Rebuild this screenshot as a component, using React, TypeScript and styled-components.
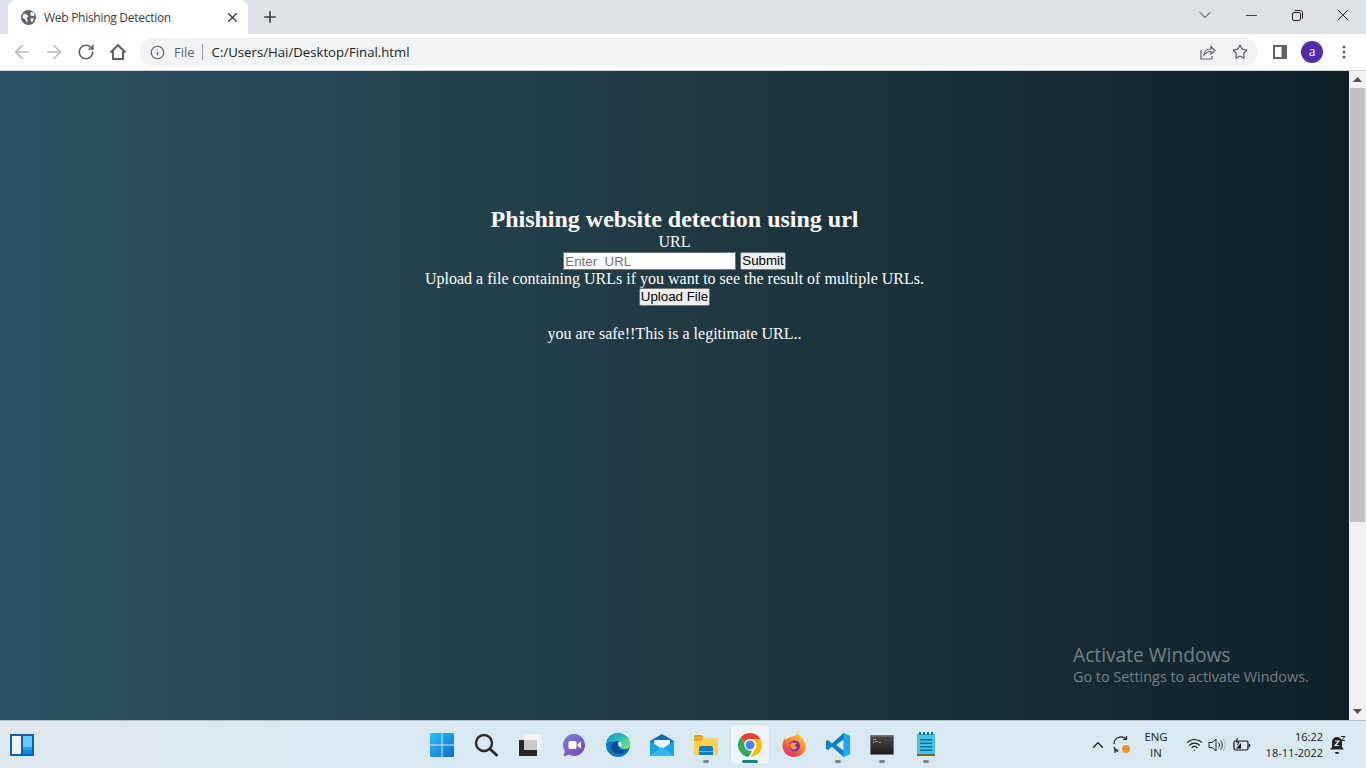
import React from "react"
import styled, { createGlobalStyle } from "styled-components"
import { ChevronDown, X, Plus, Minus, ArrowLeft, ArrowRight, RotateCw, Info, Star, ChevronUp, Wifi } from "lucide-react"

const GlobalStyle = createGlobalStyle`
  html, body { margin: 0; padding: 0; height: 100%; overflow: hidden; }
  #root { height: 100%; }
  * { box-sizing: border-box; }
`

const UI_FONT = `"Open Sans", "Noto Sans", sans-serif`

const Screen = styled.div`
  width: 1366px;
  height: 768px;
  display: flex;
  flex-direction: column;
  overflow: hidden;
  font-family: ${UI_FONT};
`

/* ---------- browser chrome ---------- */
const TabStrip = styled.div`
  height: 34px;
  flex: none;
  display: flex;
  background: #dee1e6;
  padding-left: 8px;
`
const Tab = styled.div`
  width: 240px;
  height: 34px;
  background: #fff;
  border-radius: 8px 8px 0 0;
  display: flex;
  align-items: center;
  padding: 0 8px 0 13px;
  color: #3c4043;
  font-size: 12px;
`
const TabTitle = styled.span`
  margin-left: 8px;
  flex: 1;
  white-space: nowrap;
  letter-spacing: -0.28px;
`
const NewTab = styled.div`
  width: 44px;
  display: flex;
  align-items: center;
  justify-content: center;
  color: #3c4043;
`
const WindowControls = styled.div`
  margin-left: auto;
  display: flex;
`
const WindowButton = styled.div`
  width: 46px;
  height: 30px;
  display: flex;
  align-items: center;
  justify-content: center;
  color: #202124;
`
const Toolbar = styled.div`
  height: 37px;
  flex: none;
  display: flex;
  align-items: center;
  background: #fff;
  border-bottom: 1px solid #d0d2d5;
  padding: 0 6px;
`
const NavButton = styled.div<{ $muted?: boolean }>`
  width: 32px;
  height: 32px;
  flex: none;
  display: flex;
  align-items: center;
  justify-content: center;
  color: ${p => (p.$muted ? "#b8babd" : "#5f6368")};
`
const Omnibox = styled.div`
  width: 1118px;
  height: 28px;
  margin-left: 6px;
  margin-right: 6px;
  flex: none;
  background: #f1f3f4;
  border-radius: 14px;
  display: flex;
  align-items: center;
  padding: 0 2px 0 10px;
  font-size: 13px;
`
const Scheme = styled.span`
  color: #5f6368;
  margin-left: 9px;
  font-size: 13px;
`
const Divider = styled.span`
  width: 1px;
  height: 16px;
  background: #9aa0a6;
  margin: 0 9px 0 7px;
`
const Address = styled.span`
  color: #202124;
  flex: 1;
  font-size: 13.2px;
`
const Avatar = styled.div`
  width: 22px;
  height: 22px;
  border-radius: 50%;
  background: #4f2ca8;
  color: #fff;
  font-size: 12px;
  display: flex;
  align-items: center;
  justify-content: center;
  padding-bottom: 2px;
`

/* ---------- page ---------- */
const Viewport = styled.div`
  height: 649px;
  flex: none;
  display: flex;
  position: relative;
`
const Page = styled.main`
  flex: 1;
  background: linear-gradient(to right, #2c5364, #203a43, #0f2027);
  color: #fff;
  font-family: "Liberation Serif", "Times New Roman", serif;
  font-size: 16px;
  line-height: 18px;
  text-align: center;
  padding-top: 135px;
`
const Heading = styled.h2`
  margin: 0;
  font-size: 24px;
  line-height: 27px;
  font-weight: bold;
`
const Label = styled.div`
  height: 18px;
`
const FieldRow = styled.form`
  height: 18px;
  display: flex;
  justify-content: center;
  align-items: center;
  gap: 4px;
  margin-top: 1px;
`
const UrlInput = styled.input`
  width: 173px;
  height: 18px;
  padding: 0 1px;
  border: 1px solid #767676;
  background: #fff;
  font-family: "Liberation Sans", Arial, sans-serif;
  font-size: 13.333px;
  &::placeholder { color: #757575; opacity: 1; }
`
const PlainButton = styled.button`
  height: 18px;
  padding: 0 1px;
  border: 1px solid #767676;
  border-radius: 2px;
  background: #efefef;
  color: #000;
  font-family: "Liberation Sans", Arial, sans-serif;
  font-size: 13.333px;
  line-height: 16px;
`
const UploadRow = styled.div`
  height: 18px;
  display: flex;
  justify-content: center;
`
const Result = styled.p`
  margin: 19px 0 0;
`
const Watermark = styled.div`
  position: absolute;
  left: 1073px;
  top: 572px;
  color: rgba(255, 255, 255, 0.42);
  font-family: ${UI_FONT};
  white-space: nowrap;
`
const WatermarkTitle = styled.div`
  font-size: 19.2px;
  line-height: 24px;
`
const WatermarkText = styled.div`
  font-size: 14.4px;
  line-height: 20px;
`
const Scrollbar = styled.div`
  width: 17px;
  flex: none;
  background: #f1f1f1;
  display: flex;
  flex-direction: column;
  align-items: center;
`
const ScrollArrow = styled.div`
  height: 17px;
  flex: none;
  display: flex;
  align-items: center;
  justify-content: center;
`
const ScrollThumb = styled.div`
  width: 15px;
  height: 434px;
  background: #c1c1c1;
`
const ScrollSpacer = styled.div`
  flex: 1;
`

/* ---------- taskbar ---------- */
const Taskbar = styled.footer`
  height: 48px;
  flex: none;
  display: grid;
  grid-template-columns: 1fr auto 1fr;
  align-items: center;
  background: linear-gradient(to right, #dfe8ec, #d9e9f1 25%);
  border-top: 1px solid #b4c0c6;
  color: #1a1a1a;
`
const Widgets = styled.div`
  padding-left: 10px;
  display: flex;
  align-items: center;
`
const Apps = styled.div`
  display: flex;
  height: 100%;
  margin-left: 2px;
`
const AppSlot = styled.div<{ $active?: boolean }>`
  width: 44px;
  display: flex;
  align-items: center;
  justify-content: center;
  position: relative;
  &::before {
    content: "";
    display: ${p => (p.$active ? "block" : "none")};
    position: absolute;
    inset: 4px 3px 4px 3px;
    background: #eef5f9;
    border-radius: 4px;
    box-shadow: 0 0 1px rgba(0, 0, 0, 0.2);
  }
  & > svg { position: relative; }
`
const RunDot = styled.span<{ $active?: boolean }>`
  position: absolute;
  bottom: 5px;
  left: 50%;
  transform: translateX(-50%);
  width: ${p => (p.$active ? 16 : 6)}px;
  height: 3px;
  border-radius: 2px;
  background: ${p => (p.$active ? "#17808f" : "#7b858a")};
`
const Tray = styled.div`
  display: flex;
  align-items: center;
  justify-content: flex-end;
  height: 100%;
`
const TrayIcon = styled.div<{ $w: number }>`
  width: ${p => p.$w}px;
  display: flex;
  align-items: center;
  justify-content: center;
`
const Lang = styled.div`
  width: 48px;
  text-align: center;
  font-size: 11.4px;
  line-height: 16px;
`
const Clock = styled.div`
  width: 65px;
  text-align: right;
  font-size: 11px;
  line-height: 16px;
  white-space: nowrap;
`

const HomeIcon = () => (
  <svg width="18" height="18" viewBox="0 0 18 18" fill="none" stroke="#5f6368" strokeWidth="2" strokeLinejoin="miter">
    <path d="M1.5 9.5 9 2.2l7.5 7.3" />
    <path d="M4 8v8h10V8" />
  </svg>
)

const GlobeIcon = () => (
  <svg width="15" height="15" viewBox="0 0 16 16">
    <circle cx="8" cy="8" r="8" fill="#5f6368" />
    <path d="M3 3.5 6.500 5 8 7 6 8.500 7 11l-.5 3L4.500 10 1.500 8zM9.500 1.500 11 3 9.500 5l2 1.500 3-.5-1-3zM10 9h4l-2 4-1.500-1z" fill="#fff" />
  </svg>
)

const ShareIcon = () => (
  <svg width="16" height="16" viewBox="0 0 16 16" fill="none" stroke="#5f6368" strokeWidth="1.2">
    <path d="M1 6v9h11v-3" />
    <path d="M4 11c.5-4 3.500-6 7-6V2.500L15 6.500 11 10V7.500c-3 0-5 1-7 3.500z" />
  </svg>
)

const SidePanelIcon = () => (
  <svg width="14" height="14" viewBox="0 0 14 14">
    <path d="M0 0h14v14H0z" fill="#5f6368" />
    <path d="M2 2h6.500v10H2z" fill="#fff" />
  </svg>
)

const KebabIcon = () => (
  <svg width="4" height="14" viewBox="0 0 4 14" fill="#5f6368">
    <circle cx="2" cy="2" r="1.500" />
    <circle cx="2" cy="7" r="1.500" />
    <circle cx="2" cy="12" r="1.500" />
  </svg>
)

const RestoreIcon = () => (
  <svg width="11" height="11" viewBox="0 0 11 11" fill="none" stroke="#202124" strokeWidth="1">
    <rect x="0.5" y="2.500" width="8" height="8" rx="1.500" />
    <path d="M2.500.5h6a2 2 0 0 1 2 2v6" />
  </svg>
)

const ArrowIcon = ({ up }: { up?: boolean }) => (
  <svg width="9" height="5" viewBox="0 0 9 5" fill="#505050">
    <path d={up ? "M4.500 0 9 5H0z" : "M0 0h9L4.500 5z"} />
  </svg>
)

const WidgetsIcon = () => (
  <svg width="24" height="22" viewBox="0 0 24 22">
    <rect width="24" height="22" fill="#0a62b4" />
    <rect x="2" y="2" width="9" height="18" fill="#f1f3f4" />
    <rect x="13" y="2" width="9" height="11" fill="#62cdfd" />
    <rect x="13" y="13" width="9" height="3" fill="#1fa5f5" />
    <rect x="13" y="16" width="9" height="4" fill="#0d8be6" />
  </svg>
)

const StartIcon = () => (
  <svg width="24" height="24" viewBox="0 0 24 24">
    <defs>
      <linearGradient id="startFill" x1="0" y1="0" x2="1" y2="1">
        <stop offset="0" stopColor="#2ec0f7" />
        <stop offset="1" stopColor="#0670d0" />
      </linearGradient>
    </defs>
    <path d="M0 1.500A1.500 1.500 0 0 1 1.500 0h10v11.500H0zM12.500 0h10A1.500 1.500 0 0 1 24 1.500v10H12.500zM0 12.500h11.500V24h-10A1.500 1.500 0 0 1 0 22.500zM12.500 12.500H24v10a1.500 1.500 0 0 1-1.500 1.500h-10z" fill="url(#startFill)" />
  </svg>
)

const SearchIcon = () => (
  <svg width="24" height="24" viewBox="0 0 24 24" fill="none" stroke="#2b2b2b">
    <circle cx="10" cy="10" r="8" strokeWidth="2.400" />
    <path d="M16 16l6.500 6" strokeWidth="3" strokeLinecap="round" />
  </svg>
)

const TaskViewIcon = () => (
  <svg width="24" height="24" viewBox="0 0 24 24">
    <rect x="6" y="1" width="18" height="16" fill="#f4f4f4" stroke="#e3e6e8" strokeWidth="0.500" />
    <rect x="1" y="7" width="18" height="16" fill="#262626" />
    <rect x="6" y="7" width="13" height="10" fill="#c9c9c9" />
  </svg>
)

const MeetIcon = () => (
  <svg width="24" height="24" viewBox="0 0 24 24">
    <defs>
      <linearGradient id="meetFill" x1="0" y1="0" x2="1" y2="1">
        <stop offset="0" stopColor="#7b83d9" />
        <stop offset="1" stopColor="#7a3fb0" />
      </linearGradient>
    </defs>
    <path d="M12 1a11 11 0 1 1-5 20.800L1.500 23.500 2.800 18A11 11 0 0 1 12 1z" fill="url(#meetFill)" />
    <rect x="6.500" y="8" width="8" height="8" rx="1.500" fill="#fff" />
    <path d="M15.500 11 19 8.500v7L15.500 13z" fill="#fff" />
  </svg>
)

const EdgeIcon = () => (
  <svg width="24" height="24" viewBox="0 0 24 24">
    <defs>
      <linearGradient id="edgeTop" x1="0" y1="0" x2="1" y2="0.800">
        <stop offset="0" stopColor="#1398cf" />
        <stop offset="0.600" stopColor="#35c1b0" />
        <stop offset="1" stopColor="#7de86a" />
      </linearGradient>
    </defs>
    <circle cx="12" cy="12" r="12" fill="#0c78c4" />
    <path d="M.5 11C1.500 4.500 6.500 0 12 0c7 0 12 5 12 12 0 3-3 4-6 4-2 0-3-1-3-1 2-2 1-6-3-6.500C7 8 2.500 7.500.5 11z" fill="url(#edgeTop)" />
    <path d="M5 14c0 5 5 8.500 11 6.500 2-.7 4-2.500 5-4-3 1.500-8 1-9-3-.5-2 0-4 2-5-4-1.500-9 2-9 5.500z" fill="#0a4f94" />
    <path d="M13.500 8.500c2.500.5 3 3.500 1.800 6-2-.5-3.800-2.300-3.300-5z" fill="#d9e9f1" />
  </svg>
)

const MailIcon = () => (
  <svg width="24" height="24" viewBox="0 0 24 24">
    <path d="M0 8 12 1l12 7v15H0z" fill="#0e6cb8" />
    <path d="M4 7h16v7l-8 4-8-4z" fill="#eef6fb" />
    <path d="M0 8l12 8 12-8v15H0z" fill="#1ba4e8" />
    <path d="M0 23 12 14l12 9z" fill="#35b8f2" />
  </svg>
)

const FolderIcon = () => (
  <svg width="24" height="24" viewBox="0 0 24 24">
    <path d="M0 3.500A1.500 1.500 0 0 1 1.500 2h6L10 4.500H0z" fill="#d99a0b" />
    <path d="M0 5h22.500a1.500 1.500 0 0 1 1.500 1.500V21a1 1 0 0 1-1 1H1a1 1 0 0 1-1-1z" fill="#fcd051" />
    <path d="M0 5h9L6.500 8H0z" fill="#e8ad1c" />
    <path d="M5 15a2 2 0 0 1 2-2h10a2 2 0 0 1 2 2v7H5z" fill="#0f7ccc" />
    <rect x="5" y="18" width="14" height="1" fill="#5ab7ee" />
  </svg>
)

const ChromeIcon = () => (
  <svg width="24" height="24" viewBox="0 0 24 24">
    <circle cx="12" cy="12" r="12" fill="#fff" />
    <path d="M12 0a12 12 0 0 1 10.400 6H12a6 6 0 0 0-5.600 3.700L2.800 4.300A12 12 0 0 1 12 0z" fill="#ea4335" />
    <path d="M22.400 6A12 12 0 0 1 12.800 24l4.600-8.800A6 6 0 0 0 16 7.500L15 6z" fill="#fbbc04" />
    <path d="M2.800 4.300 7.500 12a5.500 5.500 0 0 0 6.500 5.600L10.800 23.900A12 12 0 0 1 2.800 4.300z" fill="#34a853" />
    <circle cx="12" cy="12" r="5.600" fill="#fff" />
    <circle cx="12" cy="12" r="4.500" fill="#4285f4" />
  </svg>
)

const FirefoxIcon = () => (
  <svg width="24" height="24" viewBox="0 0 24 24">
    <defs>
      <linearGradient id="foxFill" x1="0.800" y1="0" x2="0.200" y2="1">
        <stop offset="0" stopColor="#ffd23a" />
        <stop offset="0.500" stopColor="#ff7a2a" />
        <stop offset="1" stopColor="#e8226f" />
      </linearGradient>
    </defs>
    <path d="M16.500 0c.5 3 3 4 5 7 1.500 2.500 2.500 5 2 8-1 5.500-6 9-11.500 9C5.500 24 .5 19 .5 12.500.5 9.500 1.500 7 3 5l1 2c1.500-2 4-3 6.500-3.500C13 3 15.500 2 16.500 0z" fill="url(#foxFill)" />
    <circle cx="12.500" cy="13" r="5.500" fill="#7b2fb5" />
    <path d="M8 11c2-2 6-1.500 8 0-1-.5-3 0-3 1.500 0 1 2 1 2 2-1 2-3.500 2.500-5 1.500C8 15 7 13 8 11z" fill="#ff9a3c" />
  </svg>
)

const VsCodeIcon = () => (
  <svg width="24" height="24" viewBox="0 0 24 24">
    <path d="M17.500 0 24 3v18l-6.500 3L6 13.500 2 17l-2-1V8l2-1 4 3.500z" fill="#0a7fd0" />
    <path d="M17.500 0 24 3v18l-6.500 3z" fill="#22a6f0" />
    <path d="M17.500 6.500 10 12l7.500 5.500z" fill="#d9e9f1" />
  </svg>
)

const TerminalIcon = () => (
  <svg width="24" height="24" viewBox="0 0 24 24">
    <defs>
      <linearGradient id="termFill" x1="0" y1="0" x2="0" y2="1">
        <stop offset="0" stopColor="#4a4a4a" />
        <stop offset="1" stopColor="#1c1c1c" />
      </linearGradient>
    </defs>
    <rect y="2" width="24" height="20" rx="1" fill="#777" />
    <rect x="1" y="3.500" width="22" height="17.500" fill="url(#termFill)" />
    <path d="M3 6h3v1H3zM3 8h1v2H3zM5 8h3v1H5zM9 9h2v1H9z" fill="#9a9a9a" />
  </svg>
)

const NotepadIcon = () => (
  <svg width="24" height="26" viewBox="0 0 24 26">
    <rect x="3" y="2" width="18" height="21" fill="#45c2e8" />
    <path d="M5 0h2v3H5zM9 0h2v3H9zM13 0h2v3h-2zM17 0h2v3h-2z" fill="#0d6e95" />
    <path d="M6 7h12v1.500H6zM6 10.500h12V12H6zM6 14h12v1.500H6zM6 17.500h12V19H6z" fill="#0d6e95" />
    <rect x="3" y="22" width="18" height="2" fill="#8b5a2b" />
  </svg>
)

const SyncIcon = () => (
  <svg width="20" height="20" viewBox="0 0 20 20" fill="none" stroke="#222" strokeWidth="1.200">
    <path d="M2 9a7 7 0 0 1 12-5" />
    <path d="M14.500 1v3.500H11" />
    <path d="M2 12c.5 2 2 4 4 4.500" />
    <path d="M3 18v-3h3.500" />
    <circle cx="14" cy="14" r="4" fill="#f7941d" stroke="none" />
  </svg>
)

const SpeakerIcon = () => (
  <svg width="18" height="16" viewBox="0 0 18 16" fill="none" stroke="#222" strokeWidth="1">
    <path d="M1 5.500h3L8 2v12l-4-3.500H1z" />
    <path d="M10.500 5.500a3.500 3.500 0 0 1 0 5" />
    <path d="M12.500 3.500a6.500 6.500 0 0 1 0 9" />
    <path d="M15 2a9 9 0 0 1 0 12" stroke="#aab4b9" />
  </svg>
)

const BatteryIcon = () => (
  <svg width="18" height="14" viewBox="0 0 18 14" fill="none" stroke="#111" strokeWidth="1.200">
    <rect x="1" y="3" width="14" height="9" rx="1.500" />
    <path d="M16.500 6v3" strokeWidth="1.500" />
    <path d="M3 10.500 8 5v5.500z" fill="#111" stroke="none" />
    <path d="M4.500 0 3 4h3L4.500 7" strokeWidth="1" />
  </svg>
)

const BellIcon = () => (
  <svg width="16" height="18" viewBox="0 0 16 18">
    <path d="M7 1a5 5 0 0 1 5 5v5l2 2.500H0L2 11V6a5 5 0 0 1 5-5z" fill="#222" />
    <path d="M5 16h4a2 2 0 0 1-4 0z" fill="#222" />
    <path d="M5 5h4L5 9.500h4" fill="none" stroke="#d9e9f1" strokeWidth="1.200" />
    <path d="M11 .5h4l-4 4h4" fill="none" stroke="#222" strokeWidth="1" />
  </svg>
)

const taskbarApps = [
  { name: "start", icon: <StartIcon /> },
  { name: "search", icon: <SearchIcon /> },
  { name: "taskview", icon: <TaskViewIcon /> },
  { name: "meet", icon: <MeetIcon /> },
  { name: "edge", icon: <EdgeIcon /> },
  { name: "mail", icon: <MailIcon /> },
  { name: "files", icon: <FolderIcon />, running: true },
  { name: "chrome", icon: <ChromeIcon />, running: true, active: true },
  { name: "firefox", icon: <FirefoxIcon /> },
  { name: "vscode", icon: <VsCodeIcon />, running: true },
  { name: "terminal", icon: <TerminalIcon />, running: true },
  { name: "notepad", icon: <NotepadIcon />, running: true },
]

export default function App() {
  return (
    <Screen>
      <GlobalStyle />
      <TabStrip>
        <Tab>
          <GlobeIcon />
          <TabTitle>Web Phishing Detection</TabTitle>
          <X size={15} strokeWidth={2.4} color="#3c4043" />
        </Tab>
        <NewTab>
          <Plus size={18} strokeWidth={2.2} />
        </NewTab>
        <WindowControls>
          <WindowButton><ChevronDown size={20} strokeWidth={1.1} /></WindowButton>
          <WindowButton><Minus size={17} strokeWidth={1.2} /></WindowButton>
          <WindowButton><RestoreIcon /></WindowButton>
          <WindowButton><X size={20} strokeWidth={1.1} /></WindowButton>
        </WindowControls>
      </TabStrip>

      <Toolbar>
        <NavButton $muted><ArrowLeft size={22} strokeWidth={1.7} /></NavButton>
        <NavButton $muted><ArrowRight size={22} strokeWidth={1.7} /></NavButton>
        <NavButton><RotateCw size={18} strokeWidth={2.2} /></NavButton>
        <NavButton><HomeIcon /></NavButton>
        <Omnibox>
          <Info size={15} strokeWidth={1.9} color="#5f6368" />
          <Scheme>File</Scheme>
          <Divider />
          <Address>C:/Users/Hai/Desktop/Final.html</Address>
          <NavButton><ShareIcon /></NavButton>
          <NavButton><Star size={16} strokeWidth={1.9} /></NavButton>
        </Omnibox>
        <NavButton><SidePanelIcon /></NavButton>
        <NavButton><Avatar>a</Avatar></NavButton>
        <NavButton><KebabIcon /></NavButton>
      </Toolbar>

      <Viewport>
        <Page>
          <Heading>Phishing website detection using url</Heading>
          <Label>URL</Label>
          <FieldRow onSubmit={e => e.preventDefault()}>
            <UrlInput placeholder="Enter  URL" />
            <PlainButton type="submit">Submit</PlainButton>
          </FieldRow>
          <Label>Upload a file containing URLs if you want to see the result of multiple URLs.</Label>
          <UploadRow>
            <PlainButton type="button">Upload File</PlainButton>
          </UploadRow>
          <Result>you are safe!!This is a legitimate URL..</Result>
        </Page>
        <Scrollbar>
          <ScrollArrow><ArrowIcon up /></ScrollArrow>
          <ScrollThumb />
          <ScrollSpacer />
          <ScrollArrow><ArrowIcon /></ScrollArrow>
        </Scrollbar>
        <Watermark>
          <WatermarkTitle>Activate Windows</WatermarkTitle>
          <WatermarkText>Go to Settings to activate Windows.</WatermarkText>
        </Watermark>
      </Viewport>

      <Taskbar>
        <Widgets><WidgetsIcon /></Widgets>
        <Apps>
          {taskbarApps.map(app => (
            <AppSlot key={app.name} $active={app.active}>
              {app.icon}
              {app.running && <RunDot $active={app.active} />}
            </AppSlot>
          ))}
        </Apps>
        <Tray>
          <TrayIcon $w={28}><ChevronUp size={18} strokeWidth={1.6} /></TrayIcon>
          <TrayIcon $w={20}><SyncIcon /></TrayIcon>
          <Lang>ENG<br />IN</Lang>
          <TrayIcon $w={28}><Wifi size={17} strokeWidth={1.6} /></TrayIcon>
          <TrayIcon $w={18}><SpeakerIcon /></TrayIcon>
          <TrayIcon $w={32}><BatteryIcon /></TrayIcon>
          <Clock>16:22<br />18-11-2022</Clock>
          <TrayIcon $w={30}><BellIcon /></TrayIcon>
          <TrayIcon $w={13} />
        </Tray>
      </Taskbar>
    </Screen>
  )
}
